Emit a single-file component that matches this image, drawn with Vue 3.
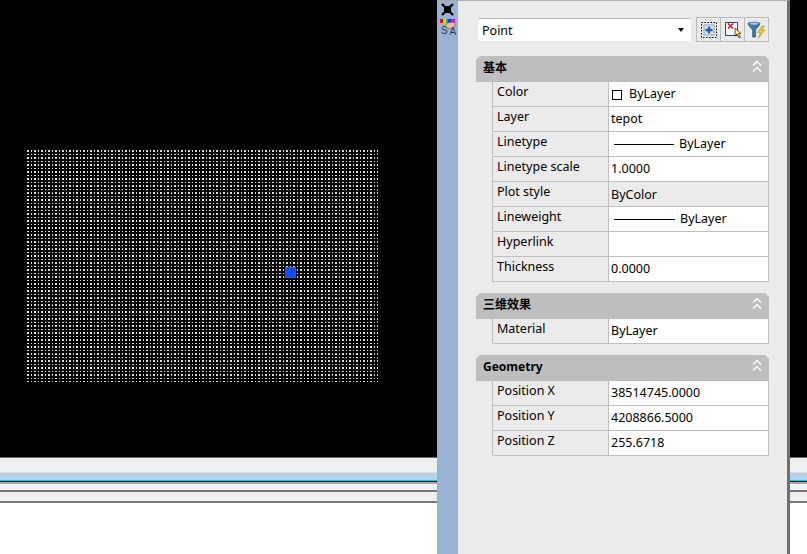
<script setup>
const sections = [
  {
    title: '基本',
    rows: [
      { label: 'Color', kind: 'swatch', value: 'ByLayer' },
      { label: 'Layer', value: 'tepot' },
      { label: 'Linetype', kind: 'line', value: 'ByLayer', lineWidth: 60, gap: 5 },
      { label: 'Linetype scale', value: '1.0000' },
      { label: 'Plot style', value: 'ByColor', readonly: true },
      { label: 'Lineweight', kind: 'line', value: 'ByLayer', lineWidth: 61, gap: 5 },
      { label: 'Hyperlink', value: '' },
      { label: 'Thickness', value: '0.0000' }
    ]
  },
  {
    title: '三维效果',
    rows: [{ label: 'Material', value: 'ByLayer' }]
  },
  {
    title: 'Geometry',
    rows: [
      { label: 'Position X', value: '38514745.0000' },
      { label: 'Position Y', value: '4208866.5000' },
      { label: 'Position Z', value: '255.6718' }
    ]
  }
];
</script>

<template>
  <div class="app">
    <div class="canvas">
      <svg class="dots" width="351" height="232">
        <defs>
          <pattern id="dot-grid" width="7" height="7" patternUnits="userSpaceOnUse">
            <path
              d="M0 0h2v2H0zM4 0h1v2H4zM0 4h2v1H0zM4 4h1v1H4z"
              fill="#dcdcdc"
              shape-rendering="crispEdges"
            />
          </pattern>
        </defs>
        <rect width="351" height="232" fill="url(#dot-grid)" />
      </svg>
      <div class="grip"></div>
    </div>

    <div class="bands">
      <div class="band-tab"></div>
      <div class="band-title"></div>
      <div class="band-cmd"></div>
      <div class="band-status"></div>
    </div>

    <aside class="palette">
      <div class="strip">
        <svg class="pin" width="13" height="13" viewBox="0 0 13 13">
          <path d="M1 1l11 11M12 1L1 12" stroke="#000" stroke-width="2.4" />
          <rect x="3" y="3" width="7" height="7" fill="#000" />
        </svg>
        <svg class="props-icon" width="18" height="19" viewBox="0 0 18 19">
          <rect x="1" y="0" width="3" height="4" fill="#f01010" />
          <rect x="4" y="0" width="3" height="4" fill="#f0e010" />
          <rect x="7" y="0" width="2" height="4" fill="#10c020" />
          <rect x="9" y="0" width="3" height="4" fill="#1030f0" />
          <rect x="12" y="0" width="4" height="4" fill="#e010e0" />
          <path d="M6 6.5l4-3h6v4l-5 2H7z" fill="#f3b9a4" stroke="#7a5a50" stroke-width=".6" />
          <circle cx="5" cy="7" r="3" fill="none" stroke="#c9b64a" stroke-width="1" />
          <text x="2" y="15" class="icon-s">S</text>
          <text x="10.5" y="16" class="icon-a">A</text>
        </svg>
      </div>

      <div class="body">
        <div class="selector">
          <div class="dropdown">
            <span>Point</span>
            <i class="caret"></i>
          </div>
          <div class="tools">
            <button class="tool" type="button">
              <svg width="18" height="18" viewBox="0 0 18 18">
                <rect x="1.5" y="1.5" width="15" height="15" fill="none" stroke="#000" stroke-dasharray="1.5 1.5" />
                <rect x="4" y="4" width="10" height="10" fill="#dfe8f3" stroke="#8aa4c4" />
                <path d="M9 5.5v7M5.5 9h7" stroke="#1f5fa8" stroke-width="2.4" />
              </svg>
            </button>
            <button class="tool" type="button">
              <svg width="18" height="18" viewBox="0 0 18 18">
                <path d="M1.5 1.5h12v13h-12z" fill="#fbfbfb" stroke="#24466f" />
                <path d="M4 2.5l5 5M9 2.5l-5 5" stroke="#d81818" stroke-width="1.7" />
                <path d="M11 7v8l2-2 2 4 1.4-.7-2-3.8H17z" fill="#ffe978" stroke="#222" stroke-width=".7" />
              </svg>
            </button>
            <button class="tool" type="button">
              <svg width="20" height="18" viewBox="0 0 20 18">
                <path d="M1 2.5C1 .8 13 .8 13 2.5 13 4 9 8 8.6 9v7H5.6V9C5 8 1 4 1 2.5z" fill="#3f78aa" stroke="#2d5578" stroke-width=".7" />
                <ellipse cx="7" cy="2.6" rx="4.4" ry="1.2" fill="#a9c9e3" />
                <path d="M15 5l-4.5 6.5h3L11 17.5l7-8.5h-3.4L17.5 5z" fill="#f5cd2b" stroke="#a2861c" stroke-width=".6" />
              </svg>
            </button>
          </div>
        </div>

        <section v-for="section in sections" :key="section.title" class="section">
          <header class="section-head">
            <span class="section-title">{{ section.title }}</span>
            <svg width="10" height="13" viewBox="0 0 10 13">
              <path d="M1 5.5l4-4 4 4M1 11.5l4-4 4 4" fill="none" stroke="#fff" stroke-width="1.5" />
            </svg>
          </header>
          <div class="rows">
            <div v-for="row in section.rows" :key="row.label" class="row">
              <div class="label">{{ row.label }}</div>
              <div class="value" :class="{ readonly: row.readonly }">
                <template v-if="row.kind === 'swatch'">
                  <i class="swatch"></i>
                  <span>{{ row.value }}</span>
                </template>
                <template v-else-if="row.kind === 'line'">
                  <i class="sample" :style="{ width: row.lineWidth + 'px', marginRight: row.gap + 'px' }"></i>
                  <span>{{ row.value }}</span>
                </template>
                <span v-else>{{ row.value }}</span>
              </div>
            </div>
          </div>
        </section>
      </div>
    </aside>
  </div>
</template>

<style scoped>
.app {
  position: relative;
  width: 807px;
  height: 554px;
  overflow: hidden;
  background: #fff;
  font-family: "Noto Sans", "Noto Sans CJK SC", sans-serif;
  font-size: 12.5px;
  color: #000;
}

.canvas {
  position: relative;
  height: 457px;
  background: #000;
}

.dots {
  position: absolute;
  left: 27px;
  top: 150px;
  display: block;
}

.grip {
  position: absolute;
  left: 285px;
  top: 267px;
  width: 11px;
  height: 11px;
  box-sizing: border-box;
  background: #0b4cff;
  border: 1px solid #5a5a5a;
}

.bands {
  border-top: 1px solid #666;
  background: #fff;
}

.band-tab {
  height: 14px;
  background: #efefef;
  border-bottom: 1px solid #e0e0e0;
}

.band-title {
  height: 7px;
  background: #b6cfeb;
  border-bottom: 1px solid #1cc6de;
  box-shadow: 0 1px 0 #000;
}

.band-cmd {
  height: 6px;
  margin-top: 1px;
  border-top: 2px solid #aaa;
  background: #f4f4f4;
  border-bottom: 2px solid #777;
}

.band-status {
  height: 9px;
  background: #efefef;
  border-bottom: 2px solid #777;
}

.palette {
  position: absolute;
  left: 437px;
  top: 0;
  bottom: 0;
  width: 353px;
  box-sizing: border-box;
  display: flex;
  background: #ebebeb;
  border-top: 1px solid #aaa;
  border-left: 1px solid #aaa;
  border-right: 3px solid #707070;
}

.strip {
  width: 20px;
  flex: none;
  background: #9ab3d2;
  display: flex;
  flex-direction: column;
  align-items: center;
}

.pin {
  display: block;
  margin: 2px 0 0 -1px;
}

.props-icon {
  display: block;
  margin-top: 3px;
}

.icon-s,
.icon-a {
  font-family: "Liberation Sans", sans-serif;
  font-size: 10px;
  fill: #1f3f68;
}

.body {
  flex: 1;
  padding: 16px 18px 0 18px;
  min-width: 0;
}

.selector {
  display: flex;
  align-items: center;
  gap: 5px;
  margin-left: 2px;
  height: 25px;
}

.dropdown {
  width: 214px;
  height: 23px;
  box-sizing: border-box;
  display: flex;
  align-items: center;
  justify-content: space-between;
  padding: 0 7px 0 4px;
  background: #fff;
  border-top: 1px solid #b9b9b9;
  border-radius: 2px;
}

.caret {
  width: 0;
  height: 0;
  border-left: 3.5px solid transparent;
  border-right: 3.5px solid transparent;
  border-top: 4px solid #000;
}

.tools {
  display: flex;
  border: 1px solid #bbb;
}

.tool {
  width: 24px;
  height: 23px;
  padding: 0;
  display: flex;
  align-items: center;
  justify-content: center;
  background: #ebebeb;
  border: 0;
  border-left: 1px solid #bbb;
}

.tool:first-child {
  width: 23px;
  border-left: 0;
}

.section {
  margin-top: 11px;
}

.section:first-of-type {
  margin-top: 14px;
}

.section-head {
  height: 26px;
  box-sizing: border-box;
  display: flex;
  align-items: center;
  justify-content: space-between;
  padding: 0 7px 2px 7px;
  background: #bebebe;
  clip-path: polygon(4px 0, calc(100% - 4px) 0, 100% 4px, 100% 100%, 0 100%, 0 4px);
  font-size: 12px;
  font-weight: 700;
}

.section-title {
  line-height: 18px;
}

.section-head svg {
  margin-top: -3px;
}

.rows {
  margin-left: 16px;
  box-sizing: border-box;
  border-left: 1px solid #bfbfbf;
  border-right: 1px solid #bfbfbf;
}

.row {
  display: flex;
  height: 25px;
  box-sizing: border-box;
  border-bottom: 1px solid #bfbfbf;
}

.label {
  width: 116px;
  flex: none;
  box-sizing: border-box;
  padding: 1px 0 0 4px;
  line-height: 18px;
  white-space: nowrap;
  border-right: 1px solid #bfbfbf;
}

.value {
  flex: 1;
  display: flex;
  align-items: center;
  padding: 0 0 2px 2px;
  background: #fff;
  white-space: nowrap;
}

.value.readonly {
  padding-bottom: 0;
  background: #ebebeb;
}

.swatch {
  width: 10px;
  height: 10px;
  box-sizing: border-box;
  margin: 3px 7px 0 1px;
  border: 1px solid #000;
}

.sample {
  height: 1px;
  margin: 2px 0 0 3px;
  background: #000;
}
</style>

<style>
html,
body {
  margin: 0;
  background: #fff;
}
</style>
